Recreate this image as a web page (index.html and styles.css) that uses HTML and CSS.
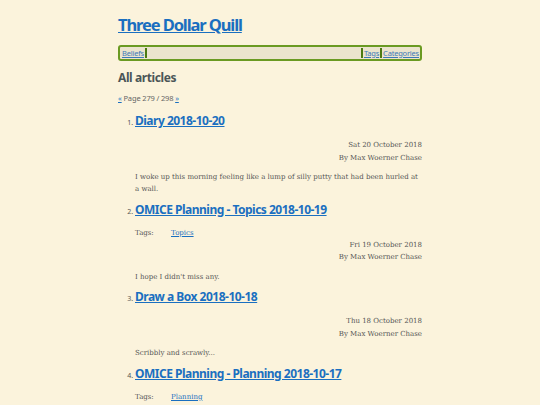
FILE: index.html
```html
<!DOCTYPE html>
<html>
<head>
<meta charset="utf-8">
<link rel="stylesheet" href="styles.css">
</head>
<body>
<div class="page">
  <h1 class="site-title"><a href="#">Three Dollar Quill</a></h1>
  <nav class="nav">
    <a href="#">Beliefs</a><span class="sep"></span>
    <span class="fill"></span>
    <span class="sep"></span><a href="#">Tags</a><span class="sep"></span><a href="#">Categories</a>
  </nav>
  <h2 class="section-title">All articles</h2>
  <p class="pager"><a href="#">«</a> Page 279 / 298 <a href="#">»</a></p>
  <ol class="articles" start="1">
    <li class="article">
      <h3 class="article-title"><a href="#">Diary 2018-10-20</a></h3>
      <div class="meta"><div>Sat 20 October 2018</div><div>By Max Woerner Chase</div></div>
      <p class="summary">I woke up this morning feeling like a lump of silly putty that had been hurled at a wall.</p>
    </li>
    <li class="article">
      <h3 class="article-title"><a href="#">OMICE Planning - Topics 2018-10-19</a></h3>
      <div class="tags"><span class="tags-label">Tags:</span><a href="#">Topics</a></div>
      <div class="meta"><div>Fri 19 October 2018</div><div>By Max Woerner Chase</div></div>
      <p class="summary">I hope I didn't miss any.</p>
    </li>
    <li class="article">
      <h3 class="article-title"><a href="#">Draw a Box 2018-10-18</a></h3>
      <div class="meta"><div>Thu 18 October 2018</div><div>By Max Woerner Chase</div></div>
      <p class="summary">Scribbly and scrawly...</p>
    </li>
    <li class="article">
      <h3 class="article-title"><a href="#">OMICE Planning - Planning 2018-10-17</a></h3>
      <div class="tags"><span class="tags-label">Tags:</span><a href="#">Planning</a></div>
      <div class="meta"><div>Wed 17 October 2018</div><div>By Max Woerner Chase</div></div>
      <p class="summary">Planning the planning.</p>
    </li>
  </ol>
</div>
</body>
</html>
```
FILE: styles.css
```css
html, body {
  margin: 0;
  padding: 0;
  background: #fbf3dc;
}
body {
  font-family: "DejaVu Serif", serif;
  color: #555;
}
.page {
  width: 304px;
  margin: 0 auto;
  padding-top: 14px;
}
a { color: #1a6fc0; }
.site-title {
  font-family: "Noto Sans", sans-serif;
  font-size: 16.5px;
  font-weight: 700;
  letter-spacing: -1.1px;
  line-height: 22px;
  margin: 0 0 9px 0;
}
.nav {
  display: flex;
  align-items: center;
  height: 12px;
  border: 2px solid #6a9a22;
  border-radius: 3px;
  background: #ebe4cd;
  padding: 0 1px 0 2px;
  font-family: "Noto Sans", sans-serif;
  font-size: 7.5px;
  letter-spacing: -0.2px;
}
.nav a { color: #3d78b8; }
.nav .fill { flex: 1; }
.sep {
  display: inline-block;
  width: 2px;
  height: 10px;
  background: #4c7a12;
  margin: 0 1px;
}
.section-title {
  font-family: "Noto Sans", sans-serif;
  font-size: 12px;
  font-weight: 700;
  letter-spacing: -0.4px;
  color: #4b5657;
  margin: 9px 0 0 0;
  line-height: 16px;
}
.pager {
  font-family: "Noto Sans", sans-serif;
  font-size: 7.5px;
  letter-spacing: -0.15px;
  color: #666;
  margin: 7px 0 0 0;
}
.articles {
  margin: 10px 0 0 0;
  padding-left: 17px;
  font-size: 7px;
}
.article::marker {
  font-family: "Noto Sans", sans-serif;
  font-size: 7px;
  color: #555;
}
.article-title {
  font-family: "Noto Sans", sans-serif;
  font-size: 12px;
  font-weight: 700;
  letter-spacing: -0.5px;
  line-height: 16px;
  margin: 0;
}
.meta {
  text-align: right;
  font-size: 7px;
  line-height: 12.5px;
  margin-top: 10px;
}
.tags {
  margin-top: 9px;
  font-size: 7px;
  line-height: 12px;
}
.tags + .meta { margin-top: 0; }
.tags-label { display: inline-block; width: 36px; }
.summary {
  font-size: 7px;
  line-height: 12px;
  margin: 7px 0 6.5px 0;
}
```
